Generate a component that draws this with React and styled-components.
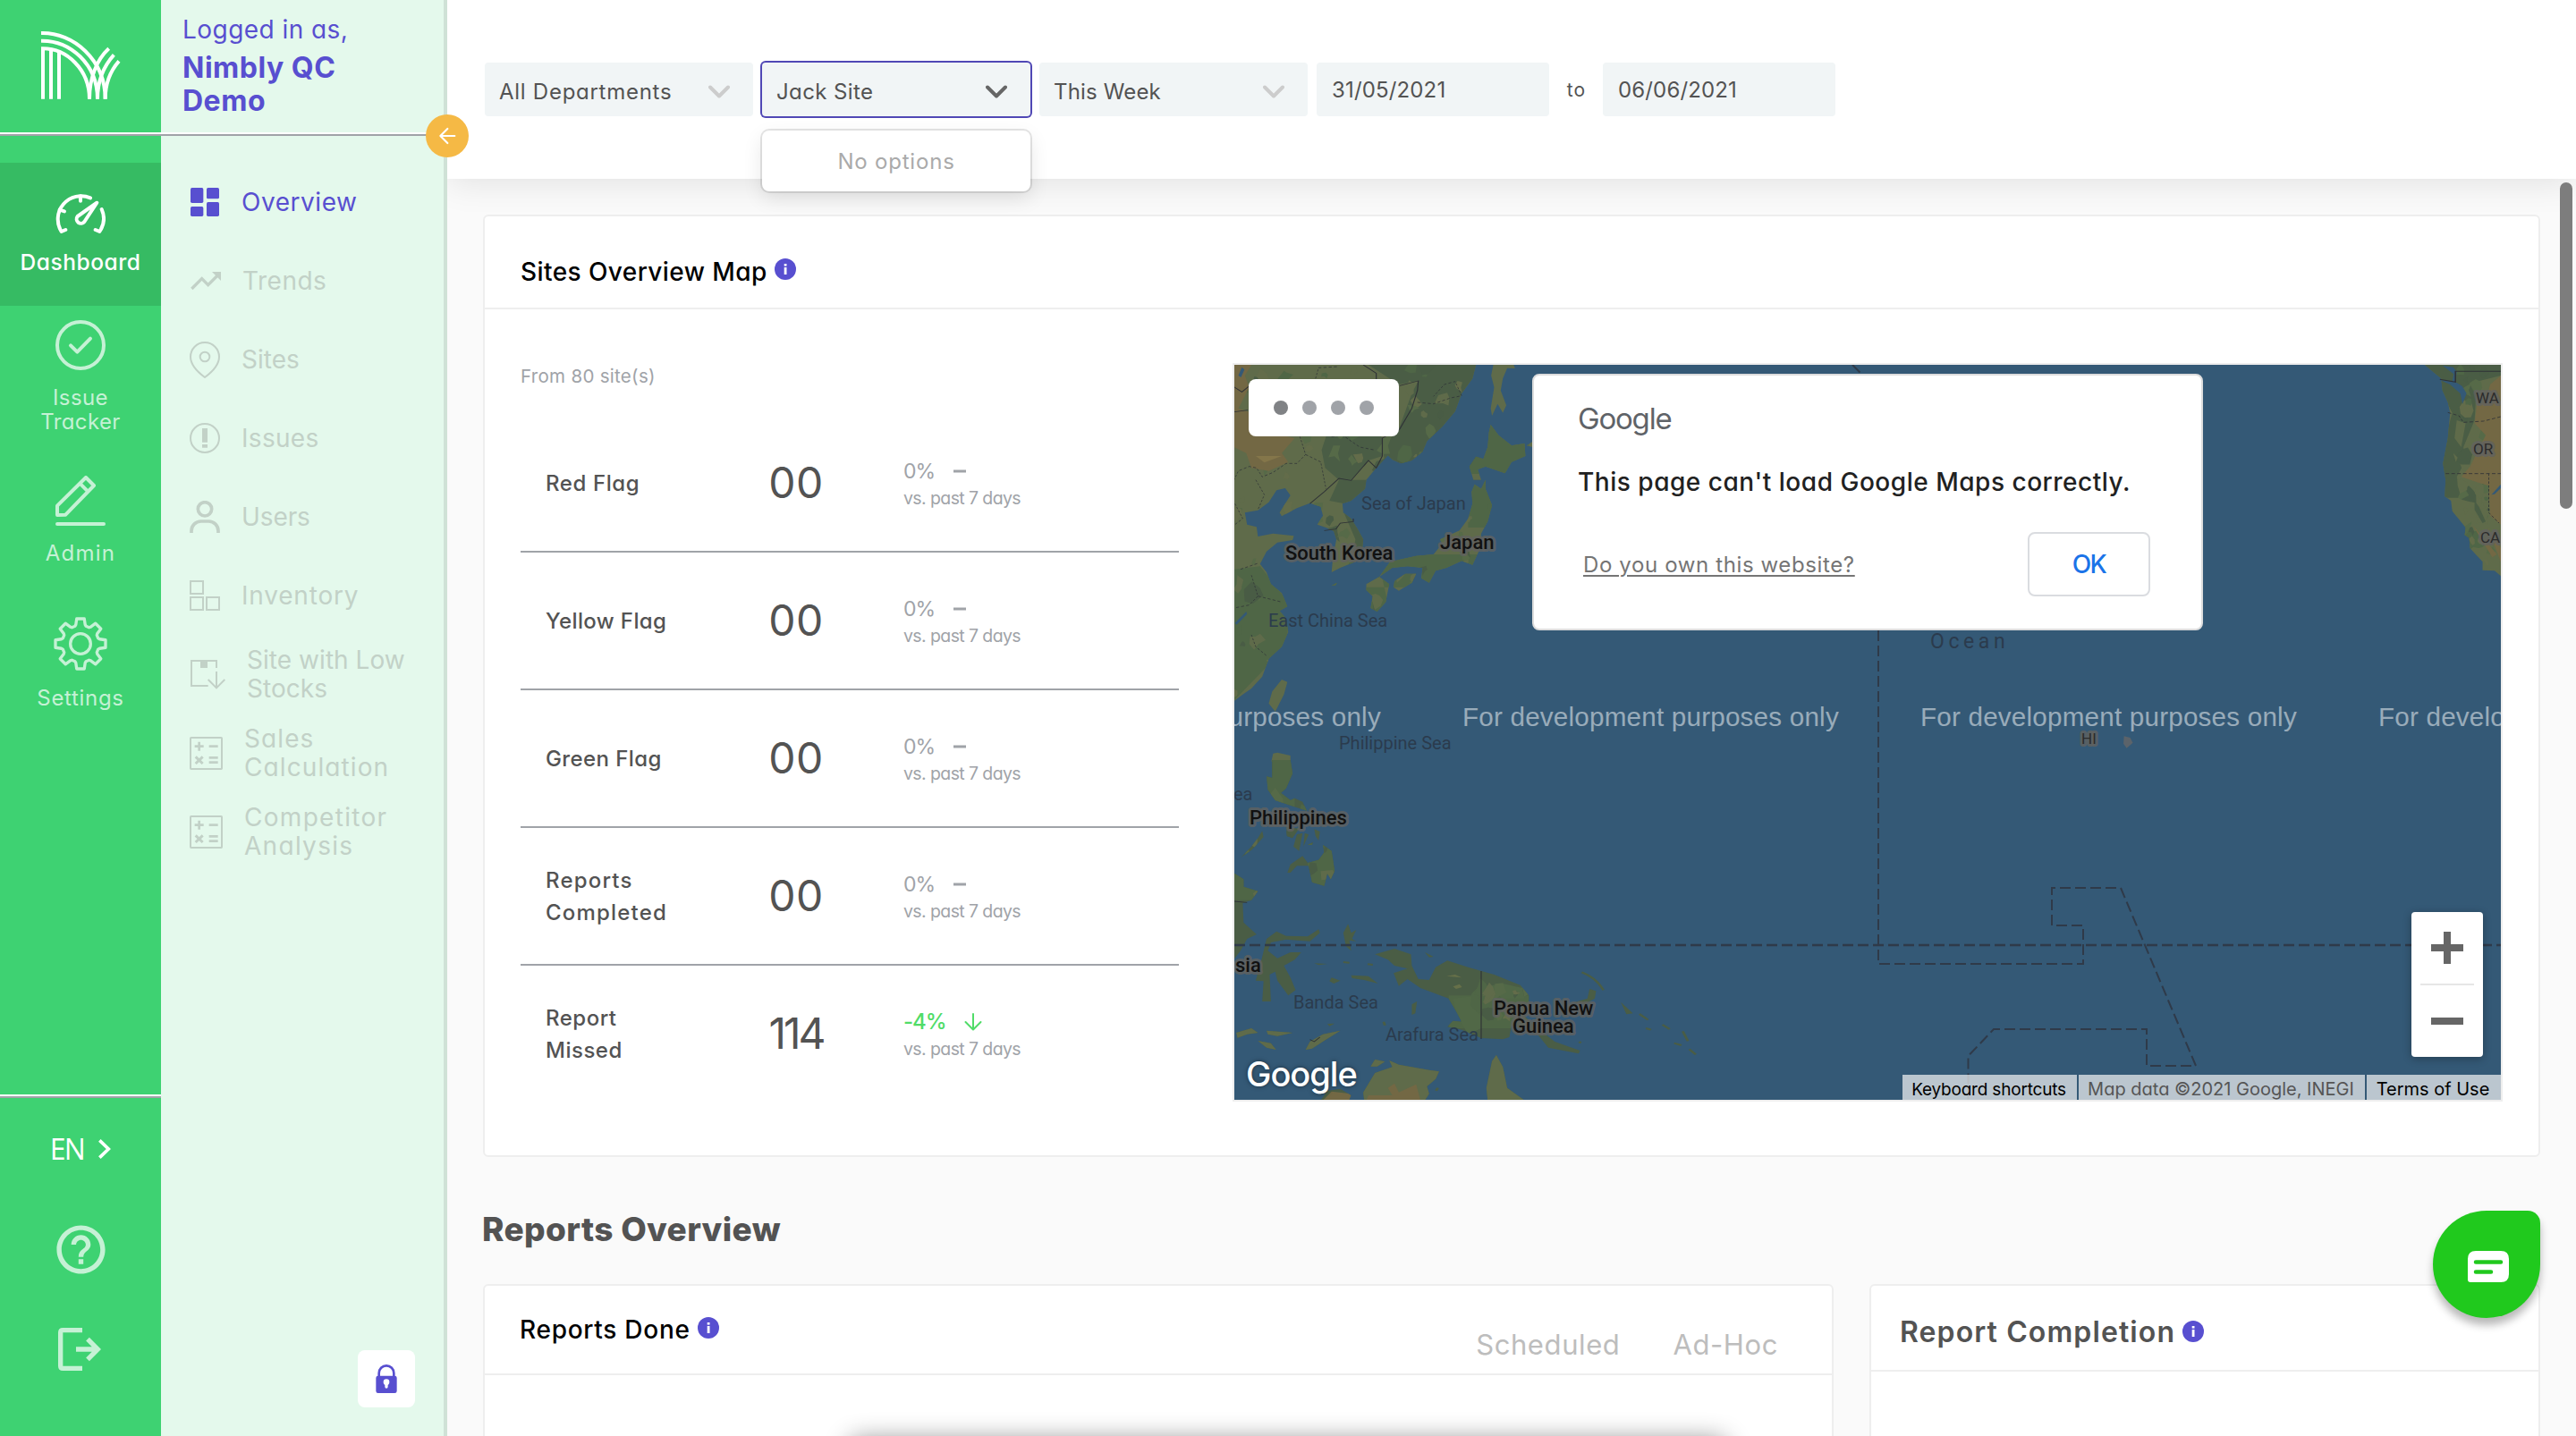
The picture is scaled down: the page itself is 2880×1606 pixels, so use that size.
import React from 'react';
import styled, { createGlobalStyle } from 'styled-components';
import { MdHelpOutline } from 'react-icons/md';

const GlobalStyle = createGlobalStyle`
  *, *::before, *::after { box-sizing: border-box; }
  html, body { margin: 0; padding: 0; }
  body {
    font-family: Inter, "Open Sans", sans-serif;
    font-feature-settings: "cv11";
    color: #535353;
    background: #fafafa;
    overflow: hidden;
  }
`;

const Page = styled.div`
  position: relative;
  display: flex;
  width: 2880px;
  height: 1606px;
  overflow: hidden;
  background: #fafafa;
`;

/* ---------- primary rail ---------- */

const Rail = styled.nav`
  display: flex;
  flex-direction: column;
  flex: none;
  width: 180px;
  background: #3ed272;
`;

const LogoBox = styled.div`
  display: flex;
  align-items: flex-start;
  height: 148px;
  padding: 34px 0 0 45px;
`;

const Divider = styled.div`
  height: 4px;
  flex: none;
  background: #fff;
  border-bottom: 2px solid #a0a3a8;
`;

const RailNav = styled.div`
  display: flex;
  flex-direction: column;
  padding-top: 30px;
`;

const RailItem = styled.div`
  display: flex;
  flex-direction: column;
  align-items: center;
  gap: ${(p) => (p.$active ? 12 : 17)}px;
  height: ${(p) => p.$height}px;
  padding-top: ${(p) => p.$pad}px;
  background: ${(p) => (p.$active ? '#36bb63' : 'transparent')};
  color: ${(p) => (p.$active ? '#fff' : '#c5f1d5')};
  svg { flex: none; display: block; }
`;

const RailLabel = styled.span`
  font-size: ${(p) => (p.$strong ? 24.5 : 24)}px;
  line-height: 27px;
  letter-spacing: ${(p) => p.$track}px;
  font-weight: ${(p) => (p.$strong ? 500 : 400)};
  text-align: center;
  white-space: pre-line;
`;

const RailFooter = styled.div`
  display: flex;
  flex-direction: column;
  align-items: center;
  height: 382px;
  margin-top: auto;
  color: #c5f1d5;
  ${Divider} { width: 100%; }
  > svg { display: block; flex: none; }
`;

const Language = styled.div`
  display: flex;
  align-items: center;
  gap: 16px;
  height: 40px;
  margin: 37px 0 60px;
  color: #fff;
  font: 500 32px/40px "Open Sans", sans-serif;
  letter-spacing: -1.6px;
`;

const LogoutSlot = styled.div`
  margin-top: 55px;
  padding-right: 2px;
  svg { display: block; }
`;

/* ---------- secondary panel ---------- */

const Panel = styled.aside`
  position: relative;
  display: flex;
  flex-direction: column;
  flex: none;
  width: 320px;
  background: #e4f9ec;
  border-right: 4px solid #cfe2d6;
  z-index: 3;
`;

const Account = styled.div`
  display: flex;
  flex-direction: column;
  gap: 6px;
  height: 148px;
  padding: 15px 0 0 24px;
  color: #584fd0;
`;

const Greeting = styled.span`
  font-size: 28px;
  line-height: 36px;
  letter-spacing: 0.45px;
`;

const AccountName = styled.strong`
  width: 220px;
  font-size: 32px;
  line-height: 37px;
  font-weight: 700;
  letter-spacing: 0.5px;
`;

const CollapseButton = styled.button`
  position: absolute;
  top: 128px;
  right: -28px;
  display: grid;
  place-items: center;
  width: 48px;
  height: 48px;
  padding: 0;
  border: 0;
  border-radius: 50%;
  background: #f5b945;
`;

const Menu = styled.div`
  display: flex;
  flex-direction: column;
  padding-top: 30px;
`;

const MenuItem = styled.div`
  display: flex;
  align-items: center;
  gap: 24px;
  height: 88px;
  padding-left: 32px;
  color: ${(p) => (p.$active ? '#584fd0' : '#c2d1c7')};
  svg { display: block; flex: none; }
`;

const MenuLabel = styled.span`
  font-size: 28px;
  line-height: 32px;
  letter-spacing: ${(p) => p.$track}px;
  white-space: pre-line;
`;

const LockButton = styled.button`
  display: grid;
  place-items: center;
  width: 64px;
  height: 64px;
  margin: auto 32px 32px auto;
  padding: 0;
  border: 0;
  border-radius: 8px;
  background: #fff;
`;

/* ---------- main column ---------- */

const Main = styled.main`
  display: flex;
  flex-direction: column;
  flex: 1;
  min-width: 0;
`;

const FilterBar = styled.header`
  position: relative;
  z-index: 2;
  display: flex;
  align-items: flex-start;
  gap: 10px;
  flex: none;
  height: 200px;
  padding: 70px 42px 0;
  background: #fff;
  box-shadow: 0 4px 36px rgba(0, 0, 0, 0.1);
`;

const Select = styled.div`
  position: relative;
  display: flex;
  align-items: center;
  justify-content: space-between;
  width: 300px;
  height: 60px;
  padding: 5px 26px 0 ${(p) => p.$inset}px;
  border-radius: 4px;
  background: #f1f5f6;
  box-shadow: ${(p) => (p.$focused ? '0 0 0 2px #5048b5' : 'none')};
  font-size: 24px;
  letter-spacing: ${(p) => p.$track}px;
  svg { color: ${(p) => (p.$focused ? '#666' : '#ccc')}; }
`;

const OptionList = styled.div`
  position: absolute;
  top: 76px;
  left: 0;
  width: 300px;
  height: 68px;
  border-radius: 8px;
  background: #fff;
  box-shadow: 0 0 0 2px rgba(0, 0, 0, 0.1), 0 8px 22px rgba(0, 0, 0, 0.1);
  color: #aaa;
  font-size: 24px;
  line-height: 70px;
  letter-spacing: 0.8px;
  text-align: center;
`;

const DateField = styled.div`
  width: 260px;
  height: 60px;
  padding-left: 17px;
  border-radius: 4px;
  background: #f1f5f6;
  font-size: 24px;
  line-height: 61px;
  letter-spacing: 0.15px;
`;

const To = styled.span`
  width: 40px;
  padding-left: 1px;
  font-size: 21px;
  line-height: 61px;
  letter-spacing: 1px;
  text-align: center;
`;

const Content = styled.div`
  display: flex;
  flex-direction: column;
  flex: 1;
  min-height: 0;
  padding: 40px 40px 0;
`;

const Card = styled.section`
  flex: none;
  width: ${(p) => p.$width}px;
  height: ${(p) => p.$height}px;
  border: 2px solid #eee;
  border-radius: 6px;
  background: #fff;
`;

const CardHeader = styled.div`
  display: flex;
  align-items: center;
  justify-content: space-between;
  height: ${(p) => p.$height}px;
  padding: ${(p) => p.$pad};
  border-bottom: 2px solid #eee;
`;

const CardTitle = styled.h2`
  display: flex;
  align-items: center;
  gap: 8px;
  margin: 0;
  color: ${(p) => (p.$large ? '#535353' : '#000')};
  font-size: ${(p) => (p.$large ? 32 : 28)}px;
  font-weight: ${(p) => (p.$large ? 600 : 500)};
  letter-spacing: ${(p) => p.$track}px;
  line-height: 40px;
  svg { display: block; margin-top: ${(p) => (p.$large ? -2 : -5)}px; }
`;

const CardBody = styled.div`
  display: flex;
  gap: 60px;
  padding: 60px 40px;
`;

const Stats = styled.div`
  width: 736px;
`;

const SiteCount = styled.p`
  margin: 1px 0 29px 0;
  color: #a0a3a8;
  font-size: 20.5px;
  line-height: 28px;
  letter-spacing: 0.3px;
`;

const StatRow = styled.div`
  display: grid;
  grid-template-columns: 250px 116px 1fr;
  align-items: center;
  height: 154px;
  padding-top: 2px;
  border-bottom: 2px solid ${(p) => (p.$last ? 'transparent' : '#a0a3a8')};
`;

const StatLabel = styled.span`
  width: 190px;
  padding-left: 28px;
  font-size: 24px;
  font-weight: 500;
  line-height: 36px;
  letter-spacing: ${(p) => p.$track}px;
  white-space: pre-line;
`;

const StatValue = styled.span`
  margin-top: -3px;
  font-size: 48px;
  line-height: 56px;
  letter-spacing: ${(p) => p.$track}px;
  text-align: center;
`;

const StatChange = styled.div`
  display: flex;
  flex-direction: column;
  padding: 2px 0 0 62px;
`;

const Delta = styled.span`
  display: flex;
  align-items: center;
  gap: ${(p) => (p.$good ? 20 : 21)}px;
  height: 30px;
  color: ${(p) => (p.$good ? '#50dc68' : '#a0a3a8')};
  font-size: ${(p) => (p.$good ? 24 : 23)}px;
  font-weight: ${(p) => (p.$good ? 500 : 400)};
  letter-spacing: -1px;
  line-height: 30px;
`;

const Period = styled.span`
  color: #a0a3a8;
  font-size: 19.5px;
  line-height: 30px;
  letter-spacing: -0.6px;
`;

/* ---------- map ---------- */

const MapFrame = styled.div`
  position: relative;
  width: 1420px;
  height: 826px;
  border: 2px solid #eee;
  overflow: hidden;
  > svg { display: block; }
`;

const Legend = styled.div`
  position: absolute;
  top: 16px;
  left: 16px;
  display: flex;
  align-items: center;
  justify-content: center;
  gap: 16px;
  width: 168px;
  height: 64px;
  border-radius: 8px;
  background: #fff;
`;

const Dot = styled.i`
  width: 16px;
  height: 16px;
  border-radius: 50%;
  background: ${(p) => (p.$dark ? '#808285' : '#a0a3a8')};
`;

const MapDialog = styled.div`
  position: absolute;
  top: 10px;
  left: 333px;
  display: flex;
  flex-direction: column;
  width: 750px;
  height: 287px;
  padding: 26px 57px 0 49px;
  border: 2px solid #ddd;
  border-radius: 8px;
  background: #fff;
`;

const DialogBrand = styled.span`
  color: #5f6368;
  font-size: 33px;
  font-weight: 400;
  line-height: 44px;
  letter-spacing: -1.2px;
`;

const DialogMessage = styled.p`
  margin: 29px 0 0;
  color: #212121;
  font-size: 28px;
  font-weight: 500;
  line-height: 40px;
  letter-spacing: 0.52px;
  white-space: nowrap;
`;

const DialogActions = styled.div`
  display: flex;
  align-items: center;
  justify-content: space-between;
  height: 72px;
  margin-top: 36px;
  padding-left: 6px;
`;

const DialogLink = styled.a`
  color: #757575;
  font-size: 24px;
  letter-spacing: 0.62px;
  text-decoration: underline;
  text-decoration-thickness: 1.5px;
  text-underline-offset: 3px;
`;

const OkButton = styled.button`
  width: 137px;
  height: 72px;
  border: 2px solid #dadce0;
  border-radius: 8px;
  background: #fff;
  color: #1a73e8;
  font: 500 28px/1 Inter, sans-serif;
  letter-spacing: -1.6px;
`;

const ZoomControl = styled.div`
  position: absolute;
  right: 20px;
  top: 612px;
  display: flex;
  flex-direction: column;
  align-items: center;
  width: 80px;
  height: 162px;
  border-radius: 4px;
  background: #fff;
  box-shadow: 0 2px 10px rgba(0, 0, 0, 0.3);
  svg { display: block; }
`;

const ZoomRule = styled.div`
  width: 60px;
  height: 2px;
  background: #e6e6e6;
`;

const MapBrand = styled.span`
  position: absolute;
  left: 13px;
  bottom: 6px;
  color: #fff;
  font-size: 38px;
  font-weight: 500;
  line-height: 46px;
  letter-spacing: -1px;
  text-shadow: 0 0 5px rgba(0, 0, 0, 0.5);
`;

const Attribution = styled.div`
  position: absolute;
  right: 0;
  bottom: 0;
  display: flex;
  gap: 2px;
  height: 28px;
`;

const Credit = styled.span`
  width: ${(p) => p.$width}px;
  padding-right: 2px;
  background: rgba(245, 245, 245, 0.7);
  color: ${(p) => (p.$muted ? '#555' : '#000')};
  font-size: ${(p) => p.$size || 20}px;
  line-height: 33px;
  letter-spacing: ${(p) => p.$track || 0}px;
  text-align: center;
  white-space: nowrap;
`;

const MapLabel = styled.text`
  font-family: Roboto, sans-serif;
  font-size: ${(p) => p.$size || 20}px;
  font-weight: ${(p) => (p.$country ? 500 : 400)};
  letter-spacing: ${(p) => p.$track || 0}px;
  fill: ${(p) => (p.$country ? '#111' : p.$state ? '#2b2b2b' : '#2b3b4d')};
  stroke: ${(p) => (p.$country || p.$state ? 'rgba(98, 98, 96, 0.8)' : 'none')};
  stroke-width: 6px;
  stroke-linejoin: round;
  paint-order: stroke;
`;

const Watermark = styled.text`
  font-family: "Liberation Sans", Arial, sans-serif;
  font-size: 29.6px;
  letter-spacing: 0.22px;
  fill: rgba(255, 255, 255, 0.5);
`;

/* ---------- lower section ---------- */

const SectionTitle = styled.h1`
  flex: none;
  height: 142px;
  margin: 0 0 0 -1px;
  padding-top: 58px;
  font-size: 37px;
  font-weight: 800;
  line-height: 46px;
  letter-spacing: 0.35px;
`;

const CardRow = styled.div`
  display: flex;
  gap: 40px;
`;

const Tabs = styled.div`
  display: flex;
  gap: 59px;
  padding-top: 34px;
  color: #bdbdbd;
  font-size: 31px;
  line-height: 40px;
  letter-spacing: 0.6px;
`;

const ScrollThumb = styled.div`
  position: absolute;
  z-index: 4;
  top: 204px;
  right: 4px;
  width: 14px;
  height: 365px;
  border-radius: 7px;
  background: #7d7d7d;
`;

const ChatButton = styled.button`
  position: absolute;
  z-index: 4;
  top: 1354px;
  right: 40px;
  display: grid;
  place-items: center;
  width: 120px;
  height: 120px;
  padding: 5px 0 0 4px;
  border: 0;
  border-radius: 60px 14px 60px 60px;
  background: #20c91d;
  box-shadow: 0 8px 10px rgba(0, 0, 0, 0.28);
`;

const Toast = styled.div`
  position: absolute;
  z-index: 3;
  top: 1610px;
  left: 950px;
  width: 980px;
  height: 60px;
  border-radius: 10px;
  background: #fff;
  box-shadow: 0 0 28px rgba(0, 0, 0, 0.45);
`;

/* ---------- icons ---------- */

const Logo = () => (
  <svg width="90" height="78" viewBox="135 102 270 234" fill="none" stroke="#fff" strokeWidth="12">
    <path d="M144 332V160M171 332V165M198 332V172" />
    <path d="M138 111C245 108 353 200 353 332" />
    <path d="M138 137C235 135 327 215 327 332" />
    <path d="M138 163C225 160 300 235 300 332" />
    <path d="M300 332C300 260 325 200 365 163M327 332C327 275 345 225 382 184M353 332C353 280 370 238 399 205" />
  </svg>
);

const line = { fill: 'none', stroke: 'currentColor', strokeLinecap: 'round', strokeLinejoin: 'round' };

const GaugeIcon = () => (
  <svg width="56" height="56" viewBox="186 636 168 168" {...line} strokeWidth="12">
    <path d="M220 771L206 777A78 78 0 0 1 303 664M320 771L334 777A78 78 0 0 0 341 702" />
    <path d="M270 658V674M200 704L216 709" />
    <path d="M325 680L260 726A14 14 0 1 0 283 744Z" />
  </svg>
);

const CheckCircleIcon = () => (
  <svg width="56" height="56" viewBox="186 1074 168 168" {...line} strokeWidth="12">
    <circle cx="270" cy="1158" r="78" />
    <path d="M237 1159L259 1181L303 1136" />
  </svg>
);

const PencilIcon = () => (
  <svg width="56" height="56" viewBox="186 156 168 168" {...line} strokeWidth="12">
    <path d="M192 318H348M192 288V257L288 162L315 189L220 287ZM268 182L294 208" />
  </svg>
);

const gearPath = (() => {
  const pt = (r, a) => `${(Math.sin(a) * r).toFixed(1)} ${(-Math.cos(a) * r).toFixed(1)}`;
  const out = [];
  for (let k = 0; k < 8; k += 1) {
    const a = (k * Math.PI) / 4;
    out.push(pt(62, a - 0.3), pt(66, a - 0.24), pt(85, a - 0.15), pt(85, a + 0.15), pt(66, a + 0.24), pt(62, a + 0.3));
  }
  return `M${out.join('L')}Z`;
})();

const GearIcon = () => (
  <svg width="60" height="60" viewBox="-90 -90 180 180" {...line} strokeWidth="10">
    <path d={gearPath} />
    <circle r="34" />
  </svg>
);

const LogoutIcon = () => (
  <svg width="48" height="48" viewBox="195 858 144 144" fill="none" stroke="currentColor" strokeWidth="16">
    <path d="M276 866H211Q203 866 203 874V986Q203 994 211 994H276M255 930H327M294 896L328 930L294 964" />
  </svg>
);

const OverviewIcon = () => (
  <svg width="34" height="34" viewBox="636 627 102 102" fill="currentColor">
    <rect x="639" y="630" width="43" height="51" rx="5" />
    <rect x="693" y="630" width="42" height="37" rx="5" />
    <rect x="639" y="693" width="43" height="33" rx="5" />
    <rect x="693" y="678" width="42" height="48" rx="5" />
  </svg>
);

const TrendsIcon = () => (
  <svg width="35" height="34" viewBox="636 891 105 102" fill="none" stroke="currentColor" strokeWidth="10">
    <path d="M643 969L677 935L698 956L730 924" />
    <path d="M711 912H741V942Z" fill="currentColor" stroke="none" />
  </svg>
);

const PinIcon = () => (
  <svg width="34" height="41" viewBox="636 1144 102 123" {...line} strokeWidth="6">
    <path d="M687 1264C668 1250 639 1226 639 1195A48 48 0 0 1 735 1195C735 1226 706 1250 687 1264Z" />
    <circle cx="687" cy="1195" r="16" />
  </svg>
);

const AlertIcon = () => (
  <svg width="34" height="34" viewBox="636 -21 102 102">
    <circle cx="687" cy="30" r="48" fill="none" stroke="currentColor" strokeWidth="6" />
    <path d="M678 -3H696V44H678ZM678 51H696V62H678Z" fill="currentColor" />
  </svg>
);

const UserIcon = () => (
  <svg width="34" height="36" viewBox="636 240 102 108" fill="none" stroke="currentColor" strokeWidth="11">
    <circle cx="687" cy="268" r="23" />
    <path d="M642 348V341A32 32 0 0 1 674 309H700A32 32 0 0 1 732 341V348" />
  </svg>
);

const BoxesIcon = () => (
  <svg width="34" height="34" viewBox="636 507 102 102" fill="none" stroke="currentColor" strokeWidth="6">
    <path d="M639 510H681V552H639ZM639 564H681V606H639ZM693 564H735V606H693Z" />
  </svg>
);

const LowStockIcon = () => (
  <svg width="40" height="40" viewBox="636 762 120 120" fill="none" stroke="currentColor" strokeWidth="6">
    <path d="M698 861H642V777H726V801M726 813V869M698 840L726 868L754 840" />
    <path d="M672 777H696V801H672Z" fill="currentColor" stroke="none" />
  </svg>
);

const CalcIcon = () => (
  <svg width="37" height="37" viewBox="636 1029 111 111" fill="none" stroke="currentColor">
    <rect x="639" y="1032" width="105" height="105" rx="2" strokeWidth="6" />
    <path d="M653 1061H683M668 1046V1076M701 1061H731M701 1099H731M701 1115H731" strokeWidth="8" />
    <path d="M656 1096L680 1119M680 1096L656 1119" strokeWidth="9" />
  </svg>
);

const LockIcon = () => (
  <svg width="24" height="32" viewBox="1260 978 72 96">
    <rect x="1261" y="1016" width="70" height="58" rx="7" fill="#584fd0" />
    <path d="M1271 1018V1007A25 25 0 0 1 1321 1007V1018" fill="none" stroke="#584fd0" strokeWidth="8" />
    <circle cx="1296" cy="1037" r="10" fill="#fff" />
    <path d="M1291 1040H1301V1053A5 5 0 0 1 1291 1053Z" fill="#fff" />
  </svg>
);

const InfoIcon = () => (
  <svg width="24" height="24" viewBox="0 0 24 24">
    <circle cx="12" cy="12" r="12" fill="#584fd0" />
    <rect x="10.7" y="10" width="2.8" height="8" fill="#fff" />
    <rect x="10.7" y="6" width="2.8" height="2.6" fill="#fff" />
  </svg>
);

const ChevronDown = () => (
  <svg width="24" height="15" viewBox="0 0 24 15" {...line} strokeWidth="4">
    <path d="M2 2.500L12 12.500L22 2.500" />
  </svg>
);

/* ---------- map drawing ---------- */

const NORTH_WEST = 'translate(1370 390) scale(0.48469 0.33333)';
const SOUTH_WEST = 'translate(1370 850) scale(0.48469 0.33333)';
const NORTH_EAST = 'translate(2100 390) scale(0.49745 0.33333)';

const asia = 'M20 54H578L570 100L545 150L530 210L500 262L465 310L455 345L430 375L405 385L385 372L375 358L345 405L325 440L322 470L290 510L270 520L272 550L290 570L305 605L318 640L315 685L300 715L265 735L245 750L248 700L256 640L250 612L232 600L212 590L225 560L220 530L195 518L165 535L130 562L125 550L150 492L138 468L118 475L100 515L75 542L45 550L50 590L72 598L75 630L110 620L158 628L155 642L120 650L95 680L80 722L95 750L105 790L130 820L143 865L125 880L140 905L145 950L130 1000L100 1040L85 1100L60 1140L40 1160L20 1182Z';
const islandsNorth = 'M618 54H665L668 66L650 65L640 100L635 140L648 190L640 215L628 185L615 225L612 200L620 130L613 90ZM612 255L630 290L660 325L690 318L692 360L660 380L645 418L600 395L582 405L590 440L572 440L563 395L578 362L595 370L605 330L608 280ZM695 325L708 312V330ZM575 455L590 470L600 440L600 470L615 525L605 580L590 620L588 670L578 700L570 725L545 712L510 735L485 745L470 785L452 770L455 735L420 730L385 735L355 765L380 715L440 695L480 690L500 655L495 640L540 610L560 570L570 520L568 480ZM390 780L415 755L440 755L430 785L400 812L388 800ZM325 790L355 765L378 790L370 850L350 882L335 870L340 830L325 810ZM245 795L257 785L255 793ZM130 1110L143 1118L135 1160L115 1218L100 1190L108 1150ZM110 1358L120 1355L150 1365V1385H106Z';
const islandsSouth = 'M108 0H150L155 45L140 95L128 110L150 135L160 128L178 140L188 170L165 160L135 145L115 135L98 100L95 55L108 60ZM140 225L170 230L155 262L142 255ZM165 250L178 245L170 305L157 290ZM183 245L192 250L180 290ZM205 232L218 240L215 270L208 255ZM190 285L202 275L200 285ZM85 238L88 258L62 300L36 327L60 290L75 262ZM225 285L245 305L252 372L243 400L235 380L228 422L200 410L192 355L165 355L150 378L143 378L150 350L178 322L190 345L215 335L228 310ZM20 380L42 400L42 425L75 440L60 470L40 480L42 545L72 585L50 600L35 640L20 668ZM95 600L118 575L140 590L190 592L215 568L218 580L195 608L140 602L105 612L98 640L120 665L150 645L175 645L160 670L135 690L150 730L162 772L145 790L120 740L115 710L102 720L105 810L85 810L88 742L70 740L85 660ZM283 550L290 580L302 570L292 600L302 608L286 605L290 640L278 625L272 580ZM205 682L235 684L215 688ZM290 722L330 725L352 750L320 738L292 732ZM245 730L265 740L250 750L240 742ZM345 652L390 633L428 652L430 690L445 735L470 738L485 695L512 673L560 695L620 720L680 755L700 790L700 840L690 860L720 900L760 945L818 975L815 985L745 965L720 920L660 890L655 930L640 937L590 933L545 905L512 895L525 875L545 878L535 850L515 800L450 765L420 735L400 758L388 715L420 700L390 690L375 670ZM460 645L480 660L470 662ZM800 815L835 800L840 768L855 775L852 800L830 818ZM912 812L940 850L925 853ZM430 820L442 810L438 850L430 855ZM185 972L195 945L225 920L265 908L230 940L200 968ZM25 915L60 900L75 915L50 920L28 932ZM95 908L155 915L120 926L98 920ZM75 942L105 950L117 972L95 965ZM235 885L252 884L240 893ZM318 1115L345 1050L385 1030L378 1008L400 1022L470 1040L493 1045L485 1070L465 1095L470 1120L460 1142H320ZM335 1028L345 1005L368 1012L350 1028ZM220 1142L235 1110L265 1103L290 1125L285 1142ZM605 1142L602 1100L615 1010L625 990L640 1030L650 1100L690 1142Z';
const america = 'M1228 54H1400V764L1385 745L1358 743V715L1330 670L1328 635L1318 625L1320 600L1290 545L1287 510L1273 495L1275 440L1269 385L1280 300L1285 215L1280 180L1268 140L1265 100L1245 75Z';

const makePatches = (seed, count, x, y, w, h) => {
  let s = seed;
  const rnd = () => {
    s = (s * 16807) % 2147483647;
    return s / 2147483647;
  };
  const tones = ['#4f6646', '#495c45', '#636c4a', '#566a48', '#5f6b4a'];
  return Array.from({ length: count }, (_, i) => {
    const cx = x + rnd() * w;
    const cy = y + rnd() * h;
    const size = 8 + rnd() * 22;
    const points = Array.from({ length: 7 }, (__, k) => {
      const a = (k / 7) * Math.PI * 2;
      const r = size * (0.3 + rnd() * 0.9);
      return `${(cx + Math.cos(a) * r * 0.8).toFixed(1)},${(cy + Math.sin(a) * r * 1.4).toFixed(1)}`;
    }).join(' ');
    return <polygon key={i} points={points} fill={tones[i % tones.length]} />;
  });
};

const WATERMARKS = [1123, 1635, 2147, 2659];

const WorldMap = () => (
  <svg width="1416" height="822" viewBox="1380 408 1416 822">
    <defs>
      <clipPath id="nw"><path d={asia + islandsNorth} /></clipPath>
      <clipPath id="sw"><path d={islandsSouth} /></clipPath>
      <clipPath id="ne"><path d={america} /></clipPath>
    </defs>
    <rect x="1380" y="408" width="1416" height="822" fill="#345976" />

    <g transform={NORTH_WEST}>
      <g clipPath="url(#nw)">
        <rect x="0" y="40" width="720" height="1350" fill="#5f6b4a" />
        <path d="M330 54H590V400H370L362 330L400 270L430 150L445 108L400 120Z" fill="#4a5d45" />
        <path d="M225 190L290 170L362 300V360L330 375L290 440L330 440L318 500L275 520L240 510L262 440L230 400L222 340L240 260Z" fill="#4a5d45" />
        <path d="M272 545L330 600V700L290 720L300 640Z" fill="#4a5d45" />
        <path d="M20 740L80 730L150 860L140 1000L20 1180Z" fill="#4f6646" />
        <path d="M560 250H700V420H560ZM560 440H620V600H560ZM350 690H580V800H320V890H380Z" fill="#4f6646" />
        {makePatches(77, 120, 20, 54, 560, 1130)}
        {makePatches(13, 14, 340, 450, 280, 400)}
        <path d="M20 54H60L45 90L55 130L30 200L70 220L130 290L160 300L130 350L145 380L100 410L60 400L48 350L20 330Z" fill="#736844" />
        <path d="M70 360H130L90 382Z" fill="#84764a" />
      </g>
      <path d="M30 90L38 62L44 70L36 96ZM22 920L48 882L50 890L26 926Z" fill="#345976" />
      <g fill="none" stroke="#2f3236">
        <path d="M20 128L38 145L55 125M20 212L52 206M195 520L228 480L262 435L290 442L330 375L348 400L362 360V300L402 270L430 200L443 140L445 108L402 124M318 54L348 82V102M228 610L255 605L265 585L295 580V570" strokeWidth="2.4" />
        <path d="M443 180L480 185L520 165L545 158L530 110L505 120L480 160M208 100L215 64L260 60M172 295L185 355L165 385L140 385L110 415L85 430L72 400L55 395L30 410L20 440M185 355L220 380L232 470M245 295L270 290L310 330L345 340M70 440L90 490L75 540M22 520L40 570L22 590M35 740L75 720M60 760L75 830L55 860L20 870M75 830L130 850M60 960L70 1000L95 1030" strokeDasharray="7 5" strokeWidth="1.8" />
      </g>
    </g>

    <g transform={SOUTH_WEST}>
      <g clipPath="url(#sw)">
        <rect x="0" y="-10" width="1000" height="1170" fill="#4a5d45" />
        <path d="M95 0H160V170H95ZM190 280H260V430H190ZM20 380H80V470H20ZM515 790H700V900H515Z" fill="#4f6646" />
        <path d="M20 895H280V980H20ZM600 980H700V1150H600Z" fill="#5f6b4a" />
        <path d="M310 1000H500V1150H310Z" fill="#5f6b4a" />
        <path d="M525 800L585 790L590 900L560 920L535 860ZM600 760L640 750L685 765L690 800L640 800Z" fill="#516847" />
        <path d="M525 760L540 752L546 762L532 768ZM510 725L530 720L545 730Z" fill="#667049" />
        {makePatches(41, 16, 590, 740, 110, 160)}
        {makePatches(5, 20, 20, 0, 230, 500)}
        <path d="M375 1100L390 1085L400 1115L440 1088L450 1142H325L330 1125H385ZM225 1142L245 1112L290 1120V1142Z" fill="#736844" />
      </g>
      <path d="M822 712Q855 730 872 772M955 852L975 872M1008 888L1025 903M1055 910L1067 943M1035 950L1052 957M1070 970L1085 988M970 900L982 905M272 678L286 680M328 685L340 687M365 878L368 890M486 1110L490 1100M816 950L820 945" fill="none" stroke="#4a5d45" strokeWidth="6" />
      <path d="M590 708V936M20 474L50 478M195 938L205 945L218 930" fill="none" stroke="#2f3236" strokeWidth="2.4" />
    </g>

    <g transform={NORTH_EAST}>
      <g clipPath="url(#ne)">
        <rect x="1220" y="50" width="190" height="720" fill="#5f6b4a" />
        <path d="M1220 54H1400V90L1345 110L1340 240L1315 330L1318 380L1300 430L1310 500L1270 500L1260 380L1290 215L1250 100Z" fill="#4a5d45" />
        {makePatches(29, 50, 1310, 60, 90, 680)}
        <path d="M1300 240L1320 250L1310 330L1295 300ZM1292 350L1302 365L1298 380Z" fill="#5f6b4a" />
        <path d="M1399 90L1375 120L1365 180L1345 190L1340 250L1365 290L1345 350L1330 395L1310 430L1350 450L1372 460L1375 560L1399 590Z" fill="#736844" />
        <path d="M1340 510L1350 530L1365 580L1358 585L1340 540Z" fill="#4a5d45" />
        <path d="M1335 590L1390 690L1380 700ZM1370 600L1400 670V720Z" fill="#736844" />
      </g>
      <path d="M1268 56L1292 62L1300 78L1297 112L1312 125L1322 150L1313 185L1308 150L1285 120L1262 105L1290 108L1293 85ZM1378 490L1399 455V468L1385 488Z" fill="#345976" />
      <path d="M1262 103L1297 112V76H1400" fill="none" stroke="#2f3236" strokeWidth="3" />
      <path d="M1280 214L1305 225L1315 247L1360 243L1399 228M1275 419H1399M1372 419V550L1395 585" fill="none" stroke="#2f3236" strokeWidth="2" strokeDasharray="8 5" />
      <path d="M552 1300L566 1305L572 1322L558 1340L551 1325Z" fill="#5b636a" />
    </g>

    <g fill="none" stroke="#2f3a49" strokeWidth="2" strokeDasharray="12 5">
      <path d="M1380 1057H2796" strokeWidth="2.4" />
      <path d="M2100 705V1078H2329V1035H2294V993H2371L2455 1192H2400V1151H2229L2200.500 1181V1230" />
      <path d="M2071 408L2083 420" />
    </g>

    {WATERMARKS.map((x) => (
      <Watermark key={x} x={x} y="811.5">For development purposes only</Watermark>
    ))}

    <MapLabel x="1522" y="570">Sea of Japan</MapLabel>
    <MapLabel x="1418" y="701">East China Sea</MapLabel>
    <MapLabel x="1497" y="838">Philippine Sea</MapLabel>
    <MapLabel x="1379" y="895">ea</MapLabel>
    <MapLabel x="1446" y="1128">Banda Sea</MapLabel>
    <MapLabel x="1549" y="1164">Arafura Sea</MapLabel>
    <MapLabel x="2158" y="725" $size={23} $track={4.6}>Ocean</MapLabel>
    <MapLabel x="1437" y="626" $size={22} $country>South Korea</MapLabel>
    <MapLabel x="1610" y="614" $size={22} $country>Japan</MapLabel>
    <MapLabel x="1397" y="922" $size={22} $country>Philippines</MapLabel>
    <MapLabel x="1381" y="1087" $size={22} $country>sia</MapLabel>
    <MapLabel x="1670" y="1135" $size={22} $country>Papua New</MapLabel>
    <MapLabel x="1691" y="1155" $size={22} $country>Guinea</MapLabel>
    <MapLabel x="2768" y="451" $size={17} $state>WA</MapLabel>
    <MapLabel x="2765" y="508" $size={17} $state>OR</MapLabel>
    <MapLabel x="2773" y="607" $size={17} $state>CA</MapLabel>
    <MapLabel x="2327" y="832" $size={17} $state>HI</MapLabel>
  </svg>
);

/* ---------- data ---------- */

const RAIL = [
  { label: 'Dashboard', icon: GaugeIcon, height: 160, pad: 30, track: 0.55, active: true },
  { label: 'Issue\nTracker', icon: CheckCircleIcon, height: 143, pad: 16, track: 0.4 },
  { label: 'Admin', icon: PencilIcon, height: 147, pad: 47, track: 1.2 },
  { label: 'Settings', icon: GearIcon, height: 170, pad: 58, track: 0.68 },
];

const MENU = [
  { label: 'Overview', icon: OverviewIcon, track: 0.54, active: true },
  { label: 'Trends', icon: TrendsIcon, track: 0.5 },
  { label: 'Sites', icon: PinIcon, track: 0 },
  { label: 'Issues', icon: AlertIcon, track: 0.3 },
  { label: 'Users', icon: UserIcon, track: -0.1 },
  { label: 'Inventory', icon: BoxesIcon, track: 0.8 },
  { label: 'Site with Low\nStocks', icon: LowStockIcon, track: 0.05 },
  { label: 'Sales\nCalculation', icon: CalcIcon, track: 1.1 },
  { label: 'Competitor\nAnalysis', icon: CalcIcon, track: 1.3 },
];

const STATS = [
  { label: 'Red Flag', value: '00', delta: '0%', track: 0.6 },
  { label: 'Yellow Flag', value: '00', delta: '0%', track: 0.38 },
  { label: 'Green Flag', value: '00', delta: '0%', track: 0.4 },
  { label: 'Reports\nCompleted', value: '00', delta: '0%', track: 1.2 },
  { label: 'Report\nMissed', value: '114', delta: '-4%', track: 0.5, good: true },
];

const ChangeMark = ({ down }) =>
  down ? (
    <svg width="20" height="20" viewBox="0 0 20 20" {...line} strokeWidth="2">
      <path d="M10 1V18M1.500 10L10 18.500L18.500 10" />
    </svg>
  ) : (
    <svg width="14" height="4" viewBox="0 0 14 4"><rect y="0.500" width="14" height="3" fill="currentColor" /></svg>
  );

export default function App() {
  return (
    <Page>
      <GlobalStyle />
      <Rail>
        <LogoBox><Logo /></LogoBox>
        <Divider />
        <RailNav>
          {RAIL.map(({ label, icon: Icon, height, pad, track, active }) => (
            <RailItem key={label} $height={height} $pad={pad} $active={active}>
              <Icon />
              <RailLabel $track={track} $strong={active}>{label}</RailLabel>
            </RailItem>
          ))}
        </RailNav>
        <RailFooter>
          <Divider />
          <Language>
            EN
            <svg width="14" height="22" viewBox="330 222 42 66" fill="none" stroke="#fff" strokeWidth="11">
              <path d="M334 226L364 255L334 284" />
            </svg>
          </Language>
          <MdHelpOutline size={65} />
          <LogoutSlot><LogoutIcon /></LogoutSlot>
        </RailFooter>
      </Rail>

      <Panel>
        <Account>
          <Greeting>Logged in as,</Greeting>
          <AccountName>Nimbly QC Demo</AccountName>
        </Account>
        <Divider />
        <CollapseButton>
          <svg width="24" height="24" viewBox="1464 420 72 72" fill="none" stroke="#fff" strokeWidth="6.5" strokeLinecap="round" strokeLinejoin="round">
            <path d="M1525 456H1477M1501 432L1477 456L1501 480" />
          </svg>
        </CollapseButton>
        <Menu>
          {MENU.map(({ label, icon: Icon, track, active }) => (
            <MenuItem key={label} $active={active}>
              <Icon />
              <MenuLabel $track={track}>{label}</MenuLabel>
            </MenuItem>
          ))}
        </Menu>
        <LockButton><LockIcon /></LockButton>
      </Panel>

      <Main>
        <FilterBar>
          <Select $inset={16} $track={0.73}>All Departments<ChevronDown /></Select>
          <Select $inset={16} $track={0.39} $focused>
            Jack Site<ChevronDown />
            <OptionList>No options</OptionList>
          </Select>
          <Select $inset={16} $track={0.15}>This Week<ChevronDown /></Select>
          <DateField>31/05/2021</DateField>
          <To>to</To>
          <DateField>06/06/2021</DateField>
        </FilterBar>

        <Content>
          <Card $width={2300} $height={1054}>
            <CardHeader $height={104} $pad="21px 40px 0">
              <CardTitle $track={0.42}>Sites Overview Map<InfoIcon /></CardTitle>
            </CardHeader>
            <CardBody>
              <Stats>
                <SiteCount>From 80 site(s)</SiteCount>
                {STATS.map(({ label, value, delta, track, good }, i) => (
                  <StatRow key={label} $last={i === STATS.length - 1}>
                    <StatLabel $track={track}>{label}</StatLabel>
                    <StatValue $track={value === '114' ? -3 : 0.5}>{value}</StatValue>
                    <StatChange>
                      <Delta $good={good}>{delta}<ChangeMark down={good} /></Delta>
                      <Period>vs. past 7 days</Period>
                    </StatChange>
                  </StatRow>
                ))}
              </Stats>
              <MapFrame>
                <WorldMap />
                <Legend><Dot $dark /><Dot /><Dot /><Dot /></Legend>
                <MapBrand>Google</MapBrand>
                <MapDialog>
                  <DialogBrand>Google</DialogBrand>
                  <DialogMessage>This page can't load Google Maps correctly.</DialogMessage>
                  <DialogActions>
                    <DialogLink>Do you own this website?</DialogLink>
                    <OkButton>OK</OkButton>
                  </DialogActions>
                </MapDialog>
                <ZoomControl>
                  <svg width="80" height="80" viewBox="0 0 80 80"><path d="M22 36H36V22H44V36H58V44H44V58H36V44H22Z" fill="#666" /></svg>
                  <ZoomRule />
                  <svg width="80" height="80" viewBox="0 0 80 80"><path d="M22 36H58V44H22Z" fill="#666" /></svg>
                </ZoomControl>
                <Attribution>
                  <Credit $width={195} $size={19} $track={-0.2}>Keyboard shortcuts</Credit>
                  <Credit $width={320} $muted>Map data ©2021 Google, INEGI</Credit>
                  <Credit $width={150}>Terms of Use</Credit>
                </Attribution>
              </MapFrame>
            </CardBody>
          </Card>

          <SectionTitle>Reports Overview</SectionTitle>

          <CardRow>
            <Card $width={1510} $height={400}>
              <CardHeader $height={100} $pad="0 60px 0 39px">
                <CardTitle $track={0.72}>Reports Done<InfoIcon /></CardTitle>
                <Tabs><span>Scheduled</span><span>Ad-Hoc</span></Tabs>
              </CardHeader>
            </Card>
            <Card $width={750} $height={400}>
              <CardHeader $height={96} $pad="10px 32px 0">
                <CardTitle $large $track={1.1}>Report Completion<InfoIcon /></CardTitle>
              </CardHeader>
            </Card>
          </CardRow>
        </Content>
      </Main>

      <ScrollThumb />
      <ChatButton>
        <svg width="46" height="35" viewBox="0 0 46 35">
          <path d="M9 0H37Q46 0 46 9V26Q46 35 37 35H3Q0 35 0 32V9Q0 0 9 0Z" fill="#fff" />
          <path d="M9 12.500H37M9 23.500H26" stroke="#20c91d" strokeWidth="4.500" strokeLinecap="round" />
        </svg>
      </ChatButton>
      <Toast />
    </Page>
  );
}
